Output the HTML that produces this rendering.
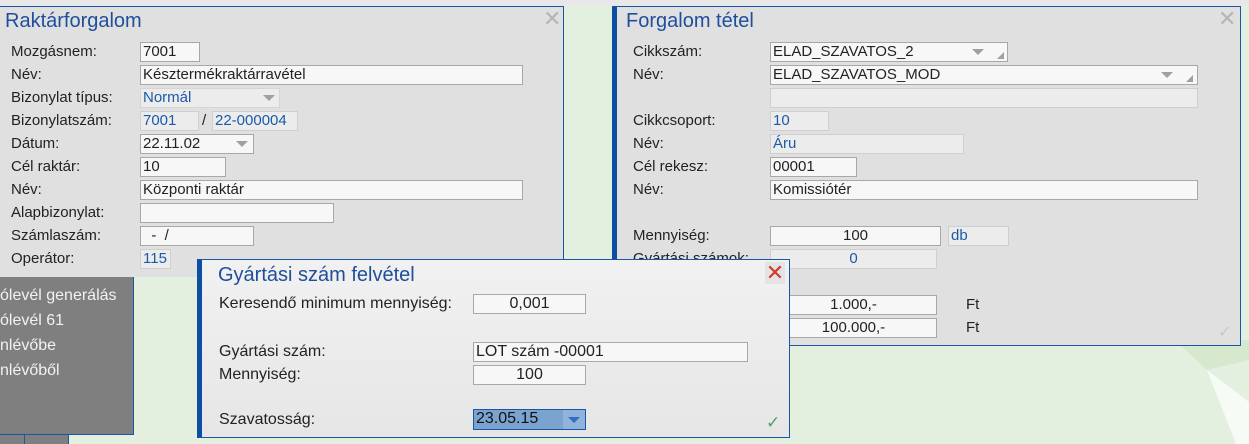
<!DOCTYPE html>
<html><head><meta charset="utf-8"><style>
*{box-sizing:border-box;margin:0;padding:0}
body{width:1249px;height:444px;overflow:hidden;background:#e3f0df;font-family:"Liberation Sans",sans-serif;position:relative;color:#222}
.a{position:absolute}
.t{font-size:20px;color:#1f4e9c;white-space:nowrap}
.l{position:absolute;font-size:15px;white-space:nowrap;line-height:20px}
.i{position:absolute;height:20px;background:#f7f7f7;border:1px solid #a8a8a8;font-size:15px;line-height:18px;padding-left:2px;white-space:nowrap;overflow:hidden}
.g{background:#ececec;border-color:#cfcfcf;color:#1b5aa8}
.r{text-align:center;padding:0}
.x{position:absolute;color:#b5b5b5;font-size:22px;line-height:20px}
.dd{position:absolute;width:0;height:0;border-left:6px solid transparent;border-right:6px solid transparent;border-top:6px solid #a0a0a0}
.rs{position:absolute;width:0;height:0;border-left:7px solid transparent;border-bottom:7px solid #a0a0a0}
.d .l,.d .i{font-size:16px}
</style></head><body>
<div class="a" style="left:0;top:0;width:1249px;height:6px;background:#e8e8e8"></div>
<svg class="a" style="left:1160px;top:340px" width="89" height="104"><polygon points="20,5 47,30 89,20 89,0 30,0" fill="#d6e9cf"/><polygon points="47,30 89,62 89,104 76,104" fill="#f7fbf6"/></svg>

<!-- panel 1 -->
<div class="a" style="left:0;top:6px;width:564px;height:271px;background:#e0e0e0;border-top:1px solid #1a56a6;border-right:1px solid #1a56a6"></div>
<div class="a t" style="left:5px;top:10px">Raktárforgalom</div>
<div class="x" style="left:543px;top:9px">✕</div>
<div class="l" style="left:11px;top:42px">Mozgásnem:</div><div class="i" style="left:140px;top:42px;width:60px">7001</div>
<div class="l" style="left:11px;top:65px">Név:</div><div class="i" style="left:140px;top:65px;width:383px">Késztermékraktárravétel</div>
<div class="l" style="left:11px;top:88px">Bizonylat típus:</div><div class="i g" style="left:140px;top:88px;width:140px;border-color:#d5d5d5">Normál</div><div class="dd" style="left:263px;top:95px"></div>
<div class="l" style="left:11px;top:111px">Bizonylatszám:</div><div class="i g" style="left:140px;top:111px;width:59px">7001</div><div class="l" style="left:202px;top:111px">/</div><div class="i g" style="left:212px;top:111px;width:86px">22-000004</div>
<div class="l" style="left:11px;top:134px">Dátum:</div><div class="i" style="left:140px;top:134px;width:114px">22.11.02</div><div class="dd" style="left:236px;top:141px"></div>
<div class="l" style="left:11px;top:157px">Cél raktár:</div><div class="i" style="left:140px;top:157px;width:86px">10</div>
<div class="l" style="left:11px;top:180px">Név:</div><div class="i" style="left:140px;top:180px;width:383px">Központi raktár</div>
<div class="l" style="left:11px;top:203px">Alapbizonylat:</div><div class="i" style="left:140px;top:203px;width:194px"></div>
<div class="l" style="left:11px;top:226px">Számlaszám:</div><div class="i" style="left:140px;top:226px;width:114px">&nbsp;&nbsp;-&nbsp;&nbsp;/</div>
<div class="l" style="left:11px;top:249px">Operátor:</div><div class="i g" style="left:140px;top:249px;width:31px">115</div>

<!-- menu -->
<div class="a" style="left:0;top:277px;width:134px;height:158px;background:#7f7f7f;border-right:1px solid #1a56a6;border-bottom:1px solid #1a56a6"></div>
<div class="l" style="left:0;top:286px;color:#f2f2f2;font-size:16px">ólevél generálás</div>
<div class="l" style="left:0;top:311px;color:#f2f2f2;font-size:16px">ólevél 61</div>
<div class="l" style="left:0;top:336px;color:#f2f2f2;font-size:16px">nlévőbe</div>
<div class="l" style="left:0;top:361px;color:#f2f2f2;font-size:16px">nlévőből</div>
<div class="a" style="left:0;top:435px;width:69px;height:9px;background:#7f7f7f;border-right:1px solid #1a56a6"></div>
<div class="a" style="left:24px;top:435px;width:1px;height:9px;background:#1a56a6"></div>

<!-- panel 2 -->
<div class="a" style="left:612px;top:6px;width:629px;height:340px;background:#e0e0e0;border-top:1px solid #1a56a6;border-right:1px solid #1a56a6;border-bottom:1px solid #1a56a6;border-left:5px solid #0b4ea2"></div>
<div class="a t" style="left:626px;top:10px">Forgalom tétel</div>
<div class="x" style="left:1218px;top:9px">✕</div>
<div class="l" style="left:633px;top:42px">Cikkszám:</div><div class="i" style="left:770px;top:42px;width:238px">ELAD_SZAVATOS_2</div><div class="dd" style="left:972px;top:49px"></div><div class="rs" style="left:997px;top:52px"></div>
<div class="l" style="left:633px;top:65px">Név:</div><div class="i" style="left:770px;top:65px;width:428px">ELAD_SZAVATOS_MOD</div><div class="dd" style="left:1161px;top:72px"></div><div class="rs" style="left:1186px;top:75px"></div>
<div class="i g" style="left:770px;top:88px;width:428px"></div>
<div class="l" style="left:633px;top:111px">Cikkcsoport:</div><div class="i g" style="left:770px;top:111px;width:59px">10</div>
<div class="l" style="left:633px;top:134px">Név:</div><div class="i g" style="left:770px;top:134px;width:194px">Áru</div>
<div class="l" style="left:633px;top:157px">Cél rekesz:</div><div class="i" style="left:770px;top:157px;width:87px">00001</div>
<div class="l" style="left:633px;top:180px">Név:</div><div class="i" style="left:770px;top:180px;width:428px">Komissiótér</div>
<div class="l" style="left:633px;top:226px">Mennyiség:</div><div class="i r" style="left:770px;top:226px;width:171px">100</div><div class="i g" style="left:948px;top:226px;width:61px">db</div>
<div class="l" style="left:633px;top:249px">Gyártási számok:</div><div class="i g r" style="left:770px;top:249px;width:167px">0</div>
<div class="i r" style="left:770px;top:295px;width:167px">1.000,-</div><div class="l" style="left:966px;top:295px">Ft</div>
<div class="i r" style="left:770px;top:318px;width:167px">100.000,-</div><div class="l" style="left:966px;top:318px">Ft</div>
<div class="l" style="left:1218px;top:323px;color:#c8c8c8;font-size:16px">✓</div>

<!-- dialog -->
<div class="d">
<div class="a" style="left:197px;top:259px;width:593px;height:179px;background:linear-gradient(#f1f1f1,#e6e6e6);border:1px solid #1a56a6;border-left:5px solid #0b4ea2"></div>
<div class="a t" style="left:218px;top:264px">Gyártási szám felvétel</div>
<div class="a" style="left:765px;top:262px;width:20px;height:22px;background:#e4e4e4;color:#d03a2a;font-size:22px;line-height:22px;text-align:center">✕</div>
<div class="l" style="left:219px;top:294px">Keresendő minimum mennyiség:</div><div class="i r" style="left:473px;top:294px;width:113px">0,001</div>
<div class="l" style="left:219px;top:342px">Gyártási szám:</div><div class="i" style="left:473px;top:342px;width:275px">LOT szám -00001</div>
<div class="l" style="left:219px;top:365px">Mennyiség:</div><div class="i r" style="left:473px;top:365px;width:113px">100</div>
<div class="l" style="left:219px;top:410px">Szavatosság:</div><div class="i" style="left:473px;top:409px;width:113px;height:21px;background:#7aa3d0;border-color:#1a56a6;color:#111">23.05.15</div>
<div class="a" style="left:563px;top:410px;width:22px;height:19px;background:#8fb3db"></div><div class="dd" style="left:568px;top:417px;border-top-color:#2f6fbf"></div>
<div class="l" style="left:766px;top:413px;color:#4aa36a;font-size:17px">✓</div>
</div>
</body></html>
